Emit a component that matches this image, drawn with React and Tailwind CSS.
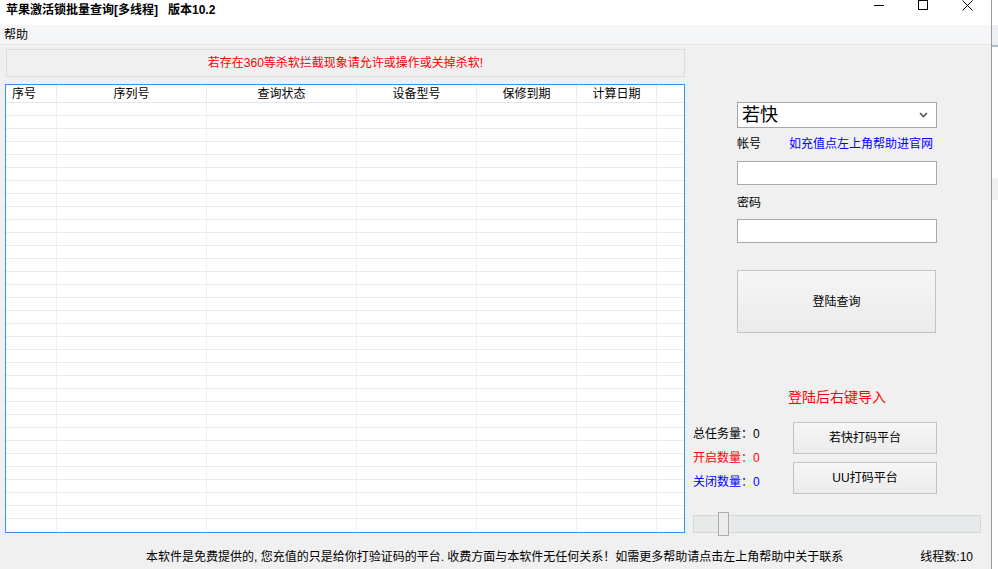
import React from "react";

const cols = [51, 150, 150, 120, 100, 80, 27];
const heads = ["序号", "序列号", "查询状态", "设备型号", "保修到期", "计算日期", ""];

function Table() {
  const rows = Array.from({ length: 33 }, (_, i) => i);
  return (
    <div className="mt-[7px] w-[680px] h-[449px] border border-[#3d8ee8] bg-white flex flex-col overflow-hidden">
      <div className="flex h-[18px] border-b border-[#e4e8ec] shrink-0">
        {heads.map((h, i) => (
          <div
            key={i}
            style={{ width: cols[i] }}
            className={`h-full flex items-center text-[12px] leading-none ${i === 0 ? "justify-start pl-[6px]" : "justify-center"} ${i < 6 ? "border-r border-[#e6ecf2]" : ""}`}
          >
            {h}
          </div>
        ))}
      </div>
      {rows.map((r) => (
        <div key={r} className={`flex h-[13px] shrink-0 ${r < 32 ? "border-b border-[#ebebeb]" : ""}`}>
          {cols.map((w, i) => (
            <div key={i} style={{ width: w }} className={`h-full ${i < 6 ? "border-r border-[#f0f0f0]" : ""}`} />
          ))}
        </div>
      ))}
    </div>
  );
}

export default function App() {
  return (
    <div className="w-[998px] h-[569px] flex overflow-hidden bg-white text-black text-[12px] font-['Liberation_Sans','Noto_Sans_CJK_SC',sans-serif]">
      <div className="w-[991px] h-full flex flex-col">
        {/* title bar */}
        <div className="h-[25px] bg-white flex items-start shrink-0">
          <div className="pl-[6px] pt-[3px] font-bold leading-[14px] text-[12px]">
            苹果激活锁批量查询[多线程]&nbsp;&nbsp;&nbsp;版本10.2
          </div>
          <div className="ml-auto flex items-start pr-[18px]">
            <svg width="10" height="10" className="mt-0">
              <line x1="0" y1="5.5" x2="10" y2="5.5" stroke="#000" strokeWidth="1" />
            </svg>
            <svg width="10" height="10" className="ml-[34px]">
              <rect x="0.5" y="0.5" width="9" height="9" fill="none" stroke="#000" strokeWidth="1" />
            </svg>
            <svg width="11" height="11" className="ml-[34px]">
              <line x1="0.5" y1="0.5" x2="10.5" y2="10.5" stroke="#000" strokeWidth="1" />
              <line x1="10.5" y1="0.5" x2="0.5" y2="10.5" stroke="#000" strokeWidth="1" />
            </svg>
          </div>
        </div>
        {/* menu bar */}
        <div className="h-[20px] bg-[#f5f6f7] border-b border-[#e6e6e6] flex items-center shrink-0">
          <span className="pl-[4px] leading-none">帮助</span>
        </div>
        {/* main */}
        <div className="flex-1 bg-[#f0f0f0] flex flex-col">
          <div className="h-[500px] flex">
            <div className="w-[685px] pl-[5px] pt-[4px] flex flex-col">
              <div className="ml-[1px] w-[679px] h-[28px] border border-[#dcdcdc] flex items-center justify-center text-[#ff0000] text-[12px] leading-none">
                若存在360等杀软拦截现象请允许或操作或关掉杀软!
              </div>
              <Table />
            </div>
            <div className="flex-1 flex flex-col">
              <div className="mt-[57px] ml-[52px] w-[200px] h-[26px] border border-[#a6a6a6] bg-white flex items-center pl-[4px] pr-[8px]">
                <span className="text-[18px] leading-none">若快</span>
                <svg width="9" height="6" className="ml-auto" viewBox="0 0 9 6">
                  <path d="M1 1 L4.5 4.5 L8 1" fill="none" stroke="#555" strokeWidth="1.6" />
                </svg>
              </div>
              <div className="mt-[8px] ml-[52px] h-[16px] flex items-center leading-none">
                <span className="w-[52px]">帐号</span>
                <span className="text-[#0000ff]">如充值点左上角帮助进官网</span>
              </div>
              <div className="mt-[9px] ml-[52px] w-[200px] h-[24px] border border-[#a9a9a9] bg-white" />
              <div className="mt-[10px] ml-[52px] h-[16px] flex items-center leading-none">密码</div>
              <div className="mt-[8px] ml-[52px] w-[200px] h-[24px] border border-[#a9a9a9] bg-white" />
              <div className="mt-[27px] ml-[52px] w-[199px] h-[63px] border border-[#c3c3c3] bg-gradient-to-b from-[#f6f6f6] to-[#ebebeb] flex items-center justify-center leading-none">
                登陆查询
              </div>
              <div className="mt-[54px] ml-[52px] w-[200px] h-[20px] flex items-center justify-center text-[14px] leading-none text-[#ff0000]">
                登陆后右键导入
              </div>
              <div className="mt-[15px] ml-[8px] flex">
                <div className="w-[100px] flex flex-col">
                  <div className="h-[24px] flex items-center leading-none">总任务量：0</div>
                  <div className="h-[24px] flex items-center leading-none text-[#ff0000]">开启数量：0</div>
                  <div className="h-[24px] flex items-center leading-none text-[#0000ff]">关闭数量：0</div>
                </div>
                <div className="flex flex-col gap-[8px]">
                  <div className="w-[144px] h-[32px] border border-[#c3c3c3] bg-gradient-to-b from-[#f6f6f6] to-[#ececec] flex items-center justify-center leading-none">
                    若快打码平台
                  </div>
                  <div className="w-[144px] h-[32px] border border-[#c3c3c3] bg-gradient-to-b from-[#f6f6f6] to-[#ececec] flex items-center justify-center leading-none">
                    UU打码平台
                  </div>
                </div>
              </div>
              <div className="mt-[21px] ml-[8px] w-[288px] h-[18px] border border-[#d6d6d6] bg-[#e7eaea] relative">
                <div className="absolute left-[24px] top-[-4px] w-[11px] h-[24px] border border-[#adadad] bg-[#ececec]" />
              </div>
            </div>
          </div>
          <div className="h-[24px] flex items-center leading-none">
            <span className="ml-[146px]">
              本软件是免费提供的, 您充值的只是给你打验证码的平台. 收费方面与本软件无任何关系！如需更多帮助请点击左上角帮助中关于联系
            </span>
            <span className="ml-auto mr-[18px]">线程数:10</span>
          </div>
        </div>
      </div>
      <div className="w-px h-full bg-[#9a9a9a]" />
      <div className="w-[6px] h-full flex flex-col">
        <div className="h-[25px] bg-white" />
        <div className="h-[20px] bg-[#eef0f3]" />
        <div className="h-[2px] bg-[#a9bcd0]" />
        <div className="h-[131px] bg-white" />
        <div className="h-[22px] bg-[#f0f0f0]" />
        <div className="flex-1 bg-white" />
      </div>
    </div>
  );
}
